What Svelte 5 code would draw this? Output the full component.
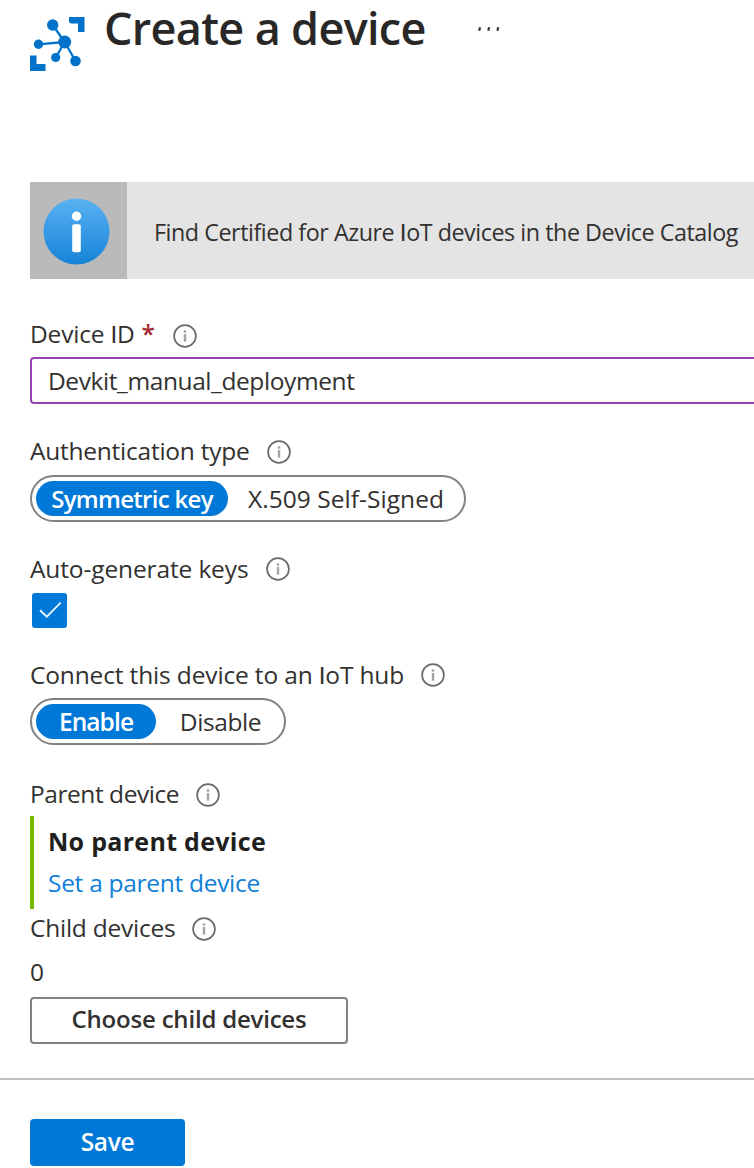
<script>
  let deviceId = $state('Devkit_manual_deployment');
  let auth = $state('Symmetric key');
  let connect = $state('Enable');
</script>

{#snippet info()}
  <svg class="info" width="24" height="24" viewBox="0 0 24 24" aria-hidden="true">
    <circle cx="12" cy="12" r="10.9" fill="none" stroke="#6b6b6b" stroke-width="1.7" />
    <rect x="10.8" y="6.3" width="2.4" height="2.4" fill="#a3a3a3" />
    <rect x="10.8" y="10" width="2.4" height="7.6" fill="#a3a3a3" />
  </svg>
{/snippet}

<main>
  <header>
    <svg class="logo" width="56" height="56" viewBox="0 0 56 56" aria-hidden="true">
      <g fill="#0072c9">
        <path d="M39 1h15.5v15h-6.5v-8.500h-6.500a2.500 2.500 0 0 1-2.500-2.500z" />
        <path d="M0 39.500h6.500v8.500h9v7h-15.500z" />
        <circle cx="22.700" cy="9" r="5.700" />
        <circle cx="8.500" cy="28.300" r="4.700" />
        <circle cx="34.700" cy="26" r="6.500" />
        <circle cx="25.700" cy="41.500" r="4.600" />
        <circle cx="45.500" cy="45" r="5.300" />
      </g>
      <path d="M22.700 9L34.700 26L8.500 28.300M25.700 41.500L34.700 26L45.500 45" fill="none" stroke="#0072c9" stroke-width="2.300" />
    </svg>
    <h1>Create a device</h1>
    <svg class="more" width="24" height="6" viewBox="0 0 24 6" aria-hidden="true">
      <path d="M2 1.200L1.200 4.800M11.100 1.200L10.300 4.800M20.200 1.200L19.400 4.800" stroke="#333" stroke-width="2.200" />
    </svg>
  </header>

  <section class="banner">
    <div class="badge">
      <svg width="67" height="67" viewBox="0 0 67 67" aria-hidden="true">
        <defs>
          <linearGradient id="blue" x1="0" y1="0" x2="0" y2="1">
            <stop offset="0" stop-color="#59b2f2" />
            <stop offset="1" stop-color="#1683d8" />
          </linearGradient>
        </defs>
        <circle cx="33.500" cy="33.500" r="33" fill="url(#blue)" />
        <circle cx="33.500" cy="18.200" r="4.700" fill="#fff" />
        <rect x="29.200" y="26.200" width="8.600" height="28" rx="2" fill="#fff" />
      </svg>
    </div>
    <span class="find">Find Certified for Azure <i>I</i>oT devices in the Device Catalog</span>
  </section>

  <div class="label l1"><span class="t-id">Device <i>I</i>D</span><span class="star">*</span>{@render info()}</div>
  <input bind:value={deviceId} aria-label="Device ID" />

  <div class="label l2"><span class="t-auth">Authentication type</span>{@render info()}</div>
  <div class="pill auth">
    <button class:on={auth === 'Symmetric key'} onclick={() => (auth = 'Symmetric key')}><span class="t-sym">Symmetric key</span></button>
    <button class:on={auth !== 'Symmetric key'} onclick={() => (auth = 'X.509')}><span class="t-x">X.509 Self-Signed</span></button>
  </div>

  <div class="label l3"><span class="t-auto">Auto-generate keys</span>{@render info()}</div>
  <div class="check">
    <svg width="35" height="35" viewBox="0 0 35 35" aria-hidden="true">
      <path d="M8 17.200L14.800 23.700L28.700 9.700" fill="none" stroke="#e6f3fd" stroke-width="1.900" />
    </svg>
  </div>

  <div class="label l4"><span class="t-conn">Connect this device to an <i>I</i>oT hub</span>{@render info()}</div>
  <div class="pill conn">
    <button class:on={connect === 'Enable'} onclick={() => (connect = 'Enable')}><span class="t-en">Enable</span></button>
    <button class:on={connect === 'Disable'} onclick={() => (connect = 'Disable')}><span class="t-dis">Disable</span></button>
  </div>

  <div class="label l5"><span class="t-par">Parent device</span>{@render info()}</div>
  <div class="parent">
    <strong>No parent device</strong>
    <a href="#parent">Set a parent device</a>
  </div>

  <div class="label l6"><span class="t-child">Child devices</span>{@render info()}</div>
  <div class="count">0</div>
  <button class="choose"><span class="t-choose">Choose child devices</span></button>

  <footer>
    <button class="save"><span class="t-save">Save</span></button>
  </footer>
</main>

<style>
  :global(body) {
    background: #fff;
    overflow: hidden;
  }
  main {
    box-sizing: border-box;
    width: 754px;
    height: 1168px;
    overflow: hidden;
    display: flex;
    flex-direction: column;
    align-items: flex-start;
    font-family: 'Open Sans', 'Noto Sans', sans-serif;
    font-size: 24.5px;
    color: #323130;
    padding-left: 30px;
  }
  main > *, .badge, .pill button, svg {
    flex: none;
  }
  span, h1, strong, a {
    white-space: nowrap;
  }
  i {
    font-family: Lato, sans-serif;
    font-style: normal;
    font-size: 24px;
    line-height: 1;
  }
  header {
    height: 182px;
    display: flex;
    align-items: flex-start;
  }
  .logo {
    margin-top: 16px;
  }
  h1 {
    margin: 0 0 0 18px;
    width: 355px;
    font-size: 45px;
    line-height: 56px;
    font-weight: 600;
    color: #292827;
    letter-spacing: -0.68px;
  }
  .more {
    margin: 26px 0 0 19px;
  }
  .banner {
    width: 724px;
    height: 97px;
    display: flex;
    align-items: center;
    background: #e4e4e4;
    font-size: 23.3px;
  }
  .badge {
    width: 97px;
    height: 97px;
    display: grid;
    place-items: center;
    padding: 1px 4px 0 0;
    box-sizing: border-box;
    background: #bababa;
    margin-right: 27px;
  }
  .find {
    letter-spacing: -0.45px;
    padding-top: 3px;
  }
  .label {
    display: flex;
    align-items: center;
    height: 36px;
    line-height: 36px;
  }
  .info {
    margin: 2px 0 0 17px;
  }
  .l1 { margin-top: 37px; }
  .l1 .info { margin-left: 18px; margin-top: 3px; }
  .l3 .info, .l4 .info { margin-top: 0; }
  .l3 .info { margin-left: 18px; }
  .star {
    color: #a4262c;
    margin-left: 7px;
    font-weight: 600;
  }
  .t-id { letter-spacing: -0.2px; }
  .t-auth { letter-spacing: -0.24px; }
  .t-auto { letter-spacing: -0.13px; }
  .t-conn { letter-spacing: -0.15px; }
  .t-par { letter-spacing: -0.45px; }
  .t-child { letter-spacing: -0.24px; }
  .t-sym { letter-spacing: -0.7px; font-size: 24px; font-weight: 600; }
  .t-en { letter-spacing: -0.9px; font-weight: 600; }
  .t-dis { letter-spacing: -0.4px; }
  .t-x { letter-spacing: 0.05px; }
  .t-choose { letter-spacing: -0.2px; font-size: 24px; font-weight: 600; }
  .t-save { letter-spacing: -0.3px; }
  input {
    box-sizing: border-box;
    width: 740px;
    height: 47px;
    margin-top: 5px;
    padding: 0 16px;
    border: 2px solid #9741b0;
    border-radius: 4px;
    font: inherit;
    letter-spacing: -0.41px;
    color: inherit;
    outline: none;
    background: #fff;
  }
  .l2 { margin-top: 29px; }
  button {
    font: inherit;
    color: inherit;
    border: 0;
    background: none;
    padding: 0;
    display: flex;
    align-items: center;
    justify-content: center;
  }
  .pill {
    box-sizing: border-box;
    height: 47px;
    margin-top: 6px;
    padding: 4px;
    border: 2px solid #838281;
    border-radius: 24px;
    display: flex;
  }
  .pill button {
    height: 35px;
    border-radius: 18px;
    box-sizing: border-box;
  }
  .pill .on {
    background: #0078d7;
    color: #fff;
    font-weight: 500;
  }
  .auth { width: 436px; }
  .auth button:first-child { width: 192px; }
  .auth button:last-child { width: 236px; }
  .l3 { margin-top: 29px; }
  .check {
    width: 35px;
    height: 35px;
    margin: 6px 0 0 2px;
    border-radius: 3px;
    background: #0078d7;
  }
  .check svg { display: block; }
  .l4 { margin-top: 29px; }
  .conn { width: 256px; margin-top: 5px; }
  .conn button:first-child { width: 120px; }
  .conn button:last-child { width: 129px; }
  .l5 { margin-top: 31px; }
  .parent {
    box-sizing: border-box;
    height: 93px;
    margin-top: 4px;
    padding-left: 14px;
    padding-bottom: 1px;
    border-left: 4px solid #7ab800;
    display: flex;
    flex-direction: column;
    justify-content: center;
    line-height: 41px;
  }
  strong { font-weight: 700; font-size: 25px; color: #201f1e; letter-spacing: 0.3px; }
  a { color: #1080d8; text-decoration: none; letter-spacing: -0.29px; }
  .l6 { margin-top: 1px; }
  .count {
    height: 36px;
    line-height: 36px;
    margin-top: 8px;
  }
  .choose {
    box-sizing: border-box;
    width: 318px;
    height: 47px;
    margin-top: 7px;
    border: 2px solid #838281;
    border-radius: 4px;
    font-weight: 500;
    padding-bottom: 4px;
  }
  footer {
    width: 754px;
    height: 89px;
    box-sizing: border-box;
    margin: 34px 0 0 -30px;
    padding: 39px 0 0 30px;
    border-top: 2px solid #c0c0c0;
  }
  .save {
    width: 155px;
    height: 47px;
    border-radius: 4px;
    background: #0078d7;
    color: #fff;
    font-weight: 600;
    padding-bottom: 3px;
  }
</style>
